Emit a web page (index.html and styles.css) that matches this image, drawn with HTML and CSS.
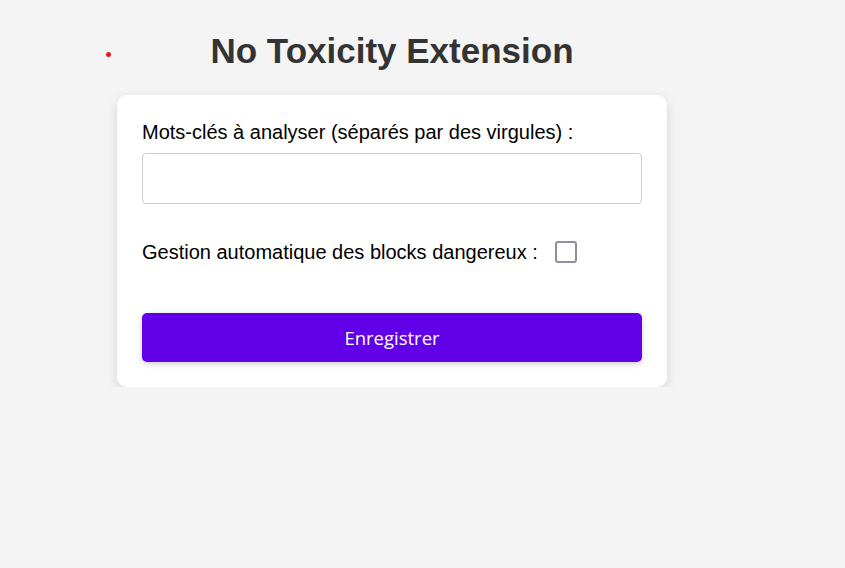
FILE: index.html
```html
<!DOCTYPE html>
<html lang="fr">
<head>
<meta charset="utf-8">
<title>No Toxicity Extension</title>
<link rel="stylesheet" href="styles.css">
</head>
<body>
<span class="dot"></span>
<main class="container">
  <h1 class="title">No Toxicity Extension</h1>
  <form class="card">
    <label class="field-label" for="keywords">Mots-clés à analyser (séparés par des virgules) :</label>
    <input class="text-input" id="keywords" type="text">
    <div class="check-row">
      <label class="check-label" for="auto">Gestion automatique des blocks dangereux :</label>
      <input class="checkbox" id="auto" type="checkbox">
    </div>
    <button class="save-btn" type="button">Enregistrer</button>
  </form>
</main>
</body>
</html>
```

FILE: styles.css
```css
html, body {
  margin: 0;
  padding: 0;
  background: #f4f4f4;
  font-family: "Liberation Sans", Arial, sans-serif;
  color: #000;
}

body {
  padding: 30px 0 0 117px;
}

.dot {
  position: absolute;
  left: 106px;
  top: 52px;
  width: 5px;
  height: 5px;
  border-radius: 50%;
  background: #e8191c;
}

.container {
  width: 550px;
}

.title {
  margin: 0 0 24px;
  text-align: center;
  font-size: 35px;
  font-weight: bold;
  color: #333;
  line-height: 41px;
}

.card {
  background: #fff;
  border-radius: 10px;
  padding: 25px 25px 25px;
  box-shadow: 0 4px 12px rgba(0, 0, 0, 0.12);
  display: flex;
  flex-direction: column;
}

.field-label {
  font-size: 20px;
  line-height: 24px;
  margin-bottom: 9px;
}

.text-input {
  box-sizing: border-box;
  height: 51px;
  border: 1px solid #ccc;
  border-radius: 4px;
  padding: 0 10px;
  font-size: 16px;
  margin: 0 0 36px;
}

.check-row {
  display: flex;
  align-items: center;
  gap: 17px;
  height: 24px;
  margin-bottom: 49px;
}

.check-label {
  font-size: 20px;
  line-height: 24px;
}

.checkbox {
  appearance: none;
  -webkit-appearance: none;
  box-sizing: border-box;
  width: 22px;
  height: 22px;
  margin: 0;
  border: 2px solid #8f8f9d;
  border-radius: 3px;
  background: #fff;
}

.save-btn {
  height: 49px;
  border: none;
  border-radius: 5px;
  background: #6200ea;
  color: #fff;
  font-family: "Open Sans", "Noto Sans", sans-serif;
  font-size: 18.5px;
  box-shadow: 0 2px 6px rgba(0, 0, 0, 0.2);
  cursor: pointer;
}
```
